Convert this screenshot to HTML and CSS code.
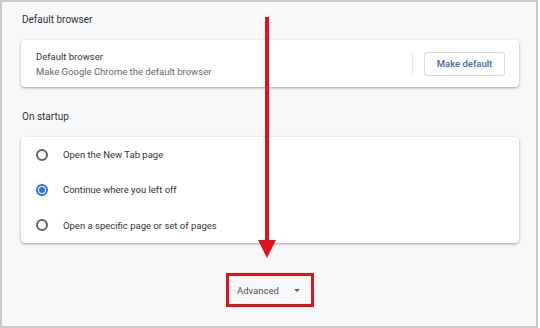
FILE: index.html
```html
<!DOCTYPE html>
<html>
<head>
  <title>Settings</title>
  <link rel="stylesheet" href="styles.css">
</head>
<body>
  <div class="frame">
    <h2 class="section-title">Default browser</h2>
    <div class="card default-card">
      <div class="card-text">
        <div class="card-title">Default browser</div>
        <div class="card-sub">Make Google Chrome the default browser</div>
      </div>
      <div class="separator"></div>
      <button class="make-default">Make default</button>
    </div>

    <h2 class="section-title startup-title">On startup</h2>
    <div class="card startup-card">
      <div class="radio-row">
        <span class="radio"></span>
        <span>Open the New Tab page</span>
      </div>
      <div class="radio-row">
        <span class="radio checked"></span>
        <span>Continue where you left off</span>
      </div>
      <div class="radio-row">
        <span class="radio"></span>
        <span>Open a specific page or set of pages</span>
      </div>
    </div>

    <div class="advanced-wrap">
      <button class="advanced">Advanced <span class="caret"></span></button>
    </div>

    <svg class="arrow" width="30" height="250" viewBox="0 0 30 250">
      <rect x="10" y="0" width="4" height="226" fill="#e2121b"/>
      <polygon points="3,223 21,223 12,241" fill="#e2121b"/>
    </svg>
  </div>
</body>
</html>
```

FILE: styles.css
```css
body {
  margin: 0;
  background: #fff;
  font-family: Roboto, "Liberation Sans", sans-serif;
}
.frame {
  position: relative;
  box-sizing: border-box;
  width: 538px;
  height: 328px;
  border: 2px solid #c8c9cb;
  background: #f7f8fa;
  padding: 11px 17px 0 19px;
}
.section-title {
  margin: 0 0 0 1px;
  font-size: 10px;
  line-height: 14px;
  font-weight: 400;
  color: #333;
}
.startup-title {
  margin-top: 23px;
}
.card {
  background: #fff;
  border-radius: 4px;
  box-shadow: 0 1px 2px rgba(60, 64, 67, 0.3), 0 1px 3px 1px rgba(60, 64, 67, 0.12);
  margin-top: 13px;
}
.default-card {
  display: flex;
  align-items: center;
  height: 47px;
  padding: 0 14px 0 15px;
}
.card-text {
  flex: 1;
  font-size: 9.5px;
  line-height: 15px;
}
.card-title {
  color: #333;
}
.card-sub {
  color: #666;
}
.separator {
  width: 1px;
  height: 25px;
  background: #e8e8e8;
  margin-right: 11px;
}
.make-default {
  width: 81px;
  height: 24px;
  border: 1px solid #dadce0;
  border-radius: 3px;
  background: #fff;
  color: #3d68b5;
  font-family: inherit;
  font-size: 9.5px;
  font-weight: 500;
  padding: 0;
}
.startup-card {
  height: 106px;
  display: flex;
  flex-direction: column;
}
.radio-row {
  flex: 1;
  display: flex;
  align-items: center;
  padding-left: 15px;
  font-size: 9.5px;
  color: #333;
}
.radio {
  box-sizing: border-box;
  width: 12px;
  height: 12px;
  border: 2px solid #5f6368;
  border-radius: 50%;
  margin-right: 15px;
  display: flex;
  align-items: center;
  justify-content: center;
}
.radio.checked {
  border-color: #2c72d8;
}
.radio.checked::after {
  content: "";
  width: 6px;
  height: 6px;
  border-radius: 50%;
  background: #2c72d8;
}
.advanced-wrap {
  display: flex;
  justify-content: center;
  margin-top: 30px;
}
.advanced {
  box-sizing: border-box;
  width: 88px;
  height: 34px;
  border: 3.5px solid #e2121b;
  background: transparent;
  font-family: inherit;
  font-size: 9.5px;
  color: #555;
  display: flex;
  align-items: center;
  padding: 0 0 0 8px;
}
.caret {
  width: 0;
  height: 0;
  border-left: 3px solid transparent;
  border-right: 3px solid transparent;
  border-top: 3px solid #666;
  margin-left: 15px;
  margin-top: 1px;
}
.arrow {
  position: absolute;
  left: 253px;
  top: 15px;
}
```
